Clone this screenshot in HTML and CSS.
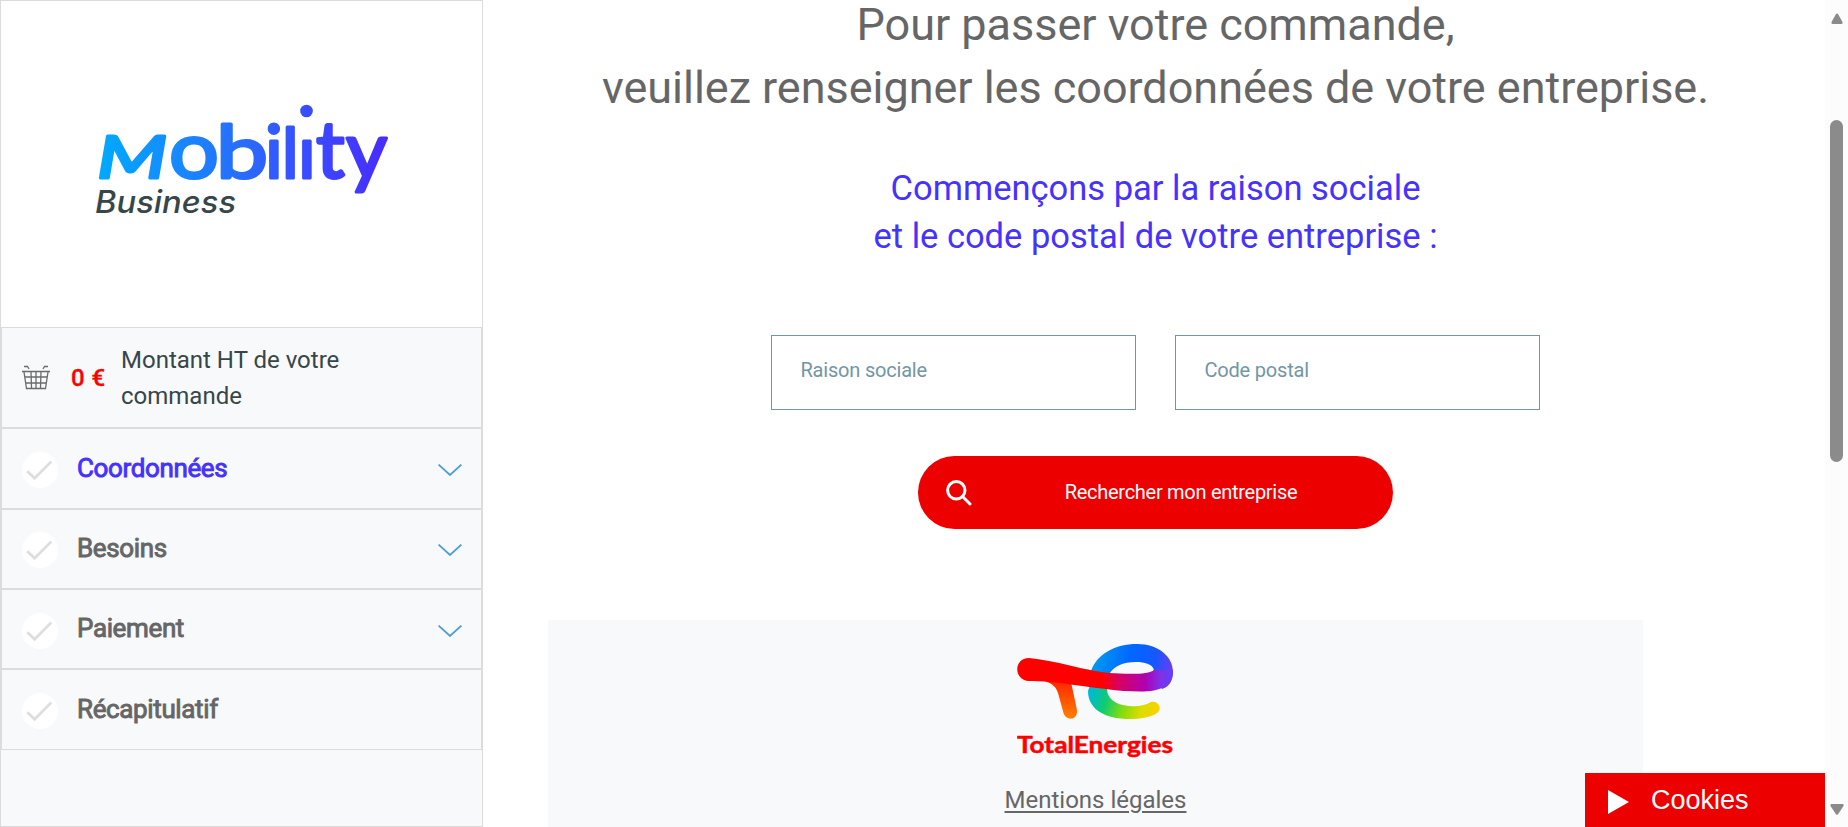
FILE: index.html
```html
<!DOCTYPE html>
<html lang="fr">
<head>
<meta charset="utf-8">
<title>Mobility Business – Commande</title>
<link rel="stylesheet" href="styles.css">
</head>
<body>
<svg class="defs" aria-hidden="true">
  <symbol id="check" viewBox="0 0 36 36"><circle cx="18" cy="18" r="18" fill="#fff"/><path d="M5.3 19.3 12.6 26.3 29.3 9.5" fill="none" stroke="#dedede" stroke-width="2.7"/></symbol>
  <symbol id="chevron" viewBox="0 0 24 12"><path d="M.6.6 12 11 23.4.6" fill="none" stroke="#4a9ad4" stroke-width="1.700"/></symbol>
</svg>
<div class="page">
  <aside class="sidebar">
    <div class="brand">
      <svg class="brand-logo" viewBox="80 90 320 140" width="320" height="140" role="img" aria-label="Mobility Business">
        <defs>
          <linearGradient id="g" gradientUnits="userSpaceOnUse" x1="98" y1="0" x2="388" y2="0"><stop offset="0" stop-color="#00aaff"/><stop offset=".35" stop-color="#1d80ff"/><stop offset=".7" stop-color="#384fff"/><stop offset="1" stop-color="#482bff"/></linearGradient>
          <mask id="dot" maskUnits="userSpaceOnUse" x="80" y="90" width="320" height="140"><path d="M80 90H400V230H80Z" fill="#fff"/><path d="M299 114H314V137H299Z" fill="#000"/></mask>
        </defs>
        <text class="word" y="178" fill="url(#g)" stroke="url(#g)" mask="url(#dot)"><tspan class="w-m" x="97" textLength="70" lengthAdjust="spacingAndGlyphs">M</tspan><tspan class="w-o" x="169" textLength="50" lengthAdjust="spacingAndGlyphs">o</tspan><tspan class="w-b" x="216" textLength="52" lengthAdjust="spacingAndGlyphs">b</tspan><tspan class="w-i" x="265">i</tspan><tspan class="w-l" x="282">l</tspan><tspan class="w-i" x="298">i</tspan><tspan class="w-t" x="316">t</tspan><tspan class="w-y" x="346">y</tspan></text>
        <circle cx="306.500" cy="111" r="6.300" fill="url(#g)"/>
        <text class="business" x="95" y="213" textLength="141" lengthAdjust="spacingAndGlyphs">Business</text>
      </svg>
    </div>
    <div class="amount">
      <svg class="basket" width="28" height="25" viewBox="0 0 28 25" fill="none" stroke="#6b6b6b" stroke-width="1.3"><path d="M0 6.500H28M2 7 4.500 23.500H23.500L26 7M2.500 12H25.500M3.500 18H24.500M9 7 9.500 23M14 7V23M19 7 18.500 23M2 1.500H5.500L7 4M26 1.500H22.500L21 4"/></svg>
      <span class="price">0 €</span>
      <span class="amount-label">Montant HT de votre commande</span>
    </div>
    <div class="step tall active"><svg class="check"><use href="#check"/></svg><span>Coordonnées</span><svg class="chev"><use href="#chevron"/></svg></div>
    <div class="step"><svg class="check"><use href="#check"/></svg><span>Besoins</span><svg class="chev"><use href="#chevron"/></svg></div>
    <div class="step low"><svg class="check"><use href="#check"/></svg><span>Paiement</span><svg class="chev"><use href="#chevron"/></svg></div>
    <div class="step tall"><svg class="check"><use href="#check"/></svg><span>Récapitulatif</span></div>
  </aside>
  <main class="main">
    <h1>Pour passer votre commande,<br>veuillez renseigner les coordonnées de votre entreprise.</h1>
    <h2>Commençons par la raison sociale<br>et le code postal de votre entreprise :</h2>
    <form class="form">
      <div class="fields">
        <input type="text" placeholder="Raison sociale">
        <input type="text" placeholder="Code postal">
      </div>
      <button class="search" type="button">
        <svg width="26" height="26" viewBox="0 0 26 26" fill="none" stroke="#fff" stroke-width="3"><circle cx="10.300" cy="10.300" r="8.700"/><path d="M16.300 16.300 24 24" stroke-linecap="round"/></svg>
        <span>Rechercher mon entreprise</span>
      </button>
    </form>
    <footer class="footer">
      <svg class="te" width="156" height="116" viewBox="0 0 156 116" role="img" aria-label="TotalEnergies">
        <defs>
          <linearGradient id="bar" gradientUnits="userSpaceOnUse" x1="0" y1="0" x2="156" y2="0"><stop offset="0" stop-color="#f00"/><stop offset=".55" stop-color="#f00"/><stop offset=".65" stop-color="#d80060"/><stop offset=".82" stop-color="#b000b0"/><stop offset=".92" stop-color="#8030e8"/><stop offset="1" stop-color="#6040f8"/></linearGradient>
          <linearGradient id="leg" x1="0" y1="0" x2="0" y2="1"><stop offset="0" stop-color="#f20"/><stop offset="1" stop-color="#ff8200"/></linearGradient>
          <linearGradient id="top" gradientUnits="userSpaceOnUse" x1="72" y1="20" x2="154" y2="38"><stop offset="0" stop-color="#00a0f0"/><stop offset=".45" stop-color="#0068ff"/><stop offset=".75" stop-color="#1458ff"/><stop offset="1" stop-color="#7438f4"/></linearGradient>
          <linearGradient id="low" gradientUnits="userSpaceOnUse" x1="74" y1="46" x2="142" y2="70"><stop offset="0" stop-color="#00b8d8"/><stop offset=".25" stop-color="#10cc70"/><stop offset=".5" stop-color="#80dc10"/><stop offset=".75" stop-color="#dcdc00"/><stop offset="1" stop-color="#ffd000"/></linearGradient>
        </defs>
        <path d="M30 36 54 38 60 66C61 77 49 77 46.500 69L41 49C39 43 36 40 28 37Z" fill="url(#leg)"/>
        <path d="M71 47C71 67 91 75 112 75C124 75 134 73 140 69C146 65 141 56 134 58C127 62 119 63 112 62C98 61 90 54 90 45L73 41Z" fill="url(#low)"/>
        <path d="M74 27C80 10 98 0 120 0C142 0 156 13 156 28C156 37 152 43 145 45L132 30C141 29 138 18 119 18C106 18 96 22 92 31Z" fill="url(#top)"/>
        <path d="M12 14C37 16 69 27 92 29C109 30 132 31 137 26L156 26C156.500 38 148 47 127 47.500C104 48 81 44 57 41C40 38 25 37 11 37C-4 35-3 14 12 14Z" fill="url(#bar)"/>
        <text class="te-word" x="0" y="109" textLength="156" lengthAdjust="spacingAndGlyphs">TotalEnergies</text>
      </svg>
      <a class="legal" href="#">Mentions légales</a>
    </footer>
  </main>
  <div class="scrollbar">
    <svg width="12" height="11" viewBox="0 0 12 11"><path d="M5 1Q6 0 7 1L11.500 9Q12 11 10.500 11H1.500Q0 11 .5 9Z" fill="#8b8b8b"/></svg>
    <div class="thumb"></div>
    <svg class="down" width="14" height="11" viewBox="0 0 14 11"><path d="M6 10.300Q7 11.300 8 10.300L13.500 2Q14 0 12.500 0H1.500Q0 0 .5 2Z" fill="#8b8b8b"/></svg>
  </div>
</div>
<div class="cookies"><svg width="21" height="24" viewBox="0 0 21 24"><path d="M0 0 21 12 0 24Z" fill="#fff"/></svg><span>Cookies</span></div>
</body>
</html>
```
FILE: styles.css
```css
* { box-sizing: border-box; }
body { margin: 0; background: #fff; font-family: Roboto, "Liberation Sans", sans-serif; color: #666; overflow: hidden; }
.defs { position: absolute; width: 0; height: 0; }
.page { display: flex; height: 827px; }
.sidebar { width: 483px; flex: none; border: 1px solid #dcdcdc; background: #f8f9fb; }
.brand { height: 326px; background: #fff; padding: 89px 0 0 79px; }
.brand-logo { display: block; }
.word { font-family: Lato, sans-serif; font-size: 80px; stroke-width: 3px; stroke-linejoin: round; }
.w-m { font-size: 58px; font-style: italic; }
.w-b { font-size: 74px; }
.w-i { font-size: 74px; }
.w-l { font-size: 70px; }
.business { font-family: Inter, sans-serif; font-style: italic; font-size: 31px; font-weight: 500; fill: #374649; }
.amount { height: 101px; border: 1px solid #dcdcdc; display: flex; align-items: center; padding-left: 20px; color: #374649; }
.basket { flex: none; }
.price { color: #f00; font-size: 24px; -webkit-text-stroke: .3px #f00; letter-spacing: .4px; font-weight: 500; width: 50px; margin-left: 21px; white-space: nowrap; }
.amount-label { font-size: 24px; line-height: 36px; width: 260px; }
.step { height: 80px; border: 1px solid #dcdcdc; display: flex; align-items: center; padding: 0 19px 0 20px; font-size: 26px; }
.step.tall { height: 81px; }
.step span { margin-left: 19px; padding-bottom: 2px; -webkit-text-stroke: .9px currentColor; letter-spacing: -.37px; }
.step.active { color: #4632ff; }
.check { width: 36px; height: 36px; position: relative; top: 1px; }
.chev { width: 24px; height: 12px; margin-left: auto; position: relative; top: 1px; }
.low .chev, .low .check { top: 2px; }
.main { flex: 1; display: flex; flex-direction: column; padding-left: 65px; }
h1, h2 { margin: 0; font-weight: 400; text-align: center; white-space: nowrap; width: 1215px; }
h1 { font-size: 45px; line-height: 63px; margin-top: -7px; letter-spacing: -.03px; }
h2 { font-size: 34.500px; line-height: 48px; color: #4632ff; margin-top: 45px; }
.form { width: 1214px; display: flex; flex-direction: column; align-items: center; margin-top: 75px; }
.fields { display: flex; gap: 39px; }
input { width: 365px; height: 75px; border: 1px solid #7296a4; padding: 0 29px 6px; font: 20px Roboto, sans-serif; letter-spacing: -.2px; background: #fff; outline: 0; }
input::placeholder { color: #7296a4; opacity: 1; }
.search { width: 475px; height: 73px; margin-top: 46px; border: 0; border-radius: 37px; background: #ed0000; color: #fff; font: 20px Roboto, sans-serif; letter-spacing: -.28px; display: flex; align-items: center; padding: 0 0 0 28px; }
.search span { flex: 1; text-align: center; padding: 0 2px 2px 0; }
.footer { width: 1095px; flex: 1; margin-top: 91px; background: #f8f9fb; display: flex; flex-direction: column; align-items: center; padding-top: 24px; }
.te { margin-right: 1px; }
.te-word { font-family: Lato, sans-serif; font-size: 23px; font-weight: 700; fill: #f00; stroke: #f00; stroke-width: .5px; }
.legal { color: #666; font-size: 24px; line-height: 32px; margin-top: 24px; text-underline-offset: 3px; }
.scrollbar { width: 23px; background: #fcfcfc; display: flex; flex-direction: column; align-items: center; padding-top: 13px; }
.thumb { width: 13px; height: 342px; border-radius: 7px; background: #8b8b8b; margin-top: 96px; }
.down { margin-top: auto; margin-bottom: 12px; }
.cookies { position: fixed; right: 23px; bottom: 0; width: 240px; height: 54px; background: #ed0000; color: #fff; display: flex; align-items: center; padding-left: 23px; gap: 22px; font: 27px "Liberation Sans", sans-serif; }
.cookies svg { margin-top: 4px; }
```
